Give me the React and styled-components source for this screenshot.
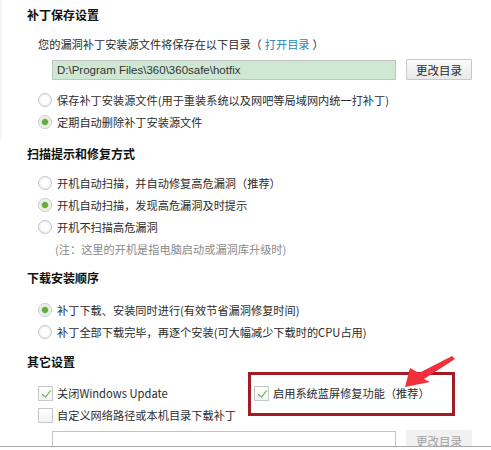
import React from "react";
import styled, { createGlobalStyle } from "styled-components";

const GlobalStyle = createGlobalStyle`
	html, body {
		margin: 0;
		padding: 0;
		background: #ffffff;
	}
	* {
		box-sizing: border-box;
	}
`;

const font = `"Noto Sans CJK SC", "Liberation Sans", sans-serif`;

export default function App() {
	return (
		<>
			<GlobalStyle />
			<Page>
				<SectionTitle>补丁保存设置</SectionTitle>
				<SectionBody>
					<Line>
						您的漏洞补丁安装源文件将保存在以下目录（<Link>打开目录</Link>）
					</Line>
					<PathRow>
						<PathInput readOnly value="D:\Program Files\360\360safe\hotfix" $filled />
						<PathButton type="button">更改目录</PathButton>
					</PathRow>
					<Options $top={9}>
						<Option>
							<Radio />
							保存补丁安装源文件(用于重装系统以及网吧等局域网内统一打补丁)
						</Option>
						<Option>
							<Radio $checked />
							定期自动删除补丁安装源文件
						</Option>
					</Options>
				</SectionBody>

				<SectionTitle $top={11}>扫描提示和修复方式</SectionTitle>
				<SectionBody>
					<Options $top={8}>
						<Option>
							<Radio />
							开机自动扫描，并自动修复高危漏洞（推荐）
						</Option>
						<Option>
							<Radio $checked />
							开机自动扫描，发现高危漏洞及时提示
						</Option>
						<Option>
							<Radio />
							开机不扫描高危漏洞
						</Option>
						<Note>(注：这里的开机是指电脑启动或漏洞库升级时)</Note>
					</Options>
				</SectionBody>

				<SectionTitle $top={8}>下载安装顺序</SectionTitle>
				<SectionBody>
					<Options $top={11}>
						<Option>
							<Radio $checked />
							补丁下载、安装同时进行(有效节省漏洞修复时间)
						</Option>
						<Option>
							<Radio />
							补丁全部下载完毕，再逐个安装(可大幅减少下载时的CPU占用)
						</Option>
					</Options>
				</SectionBody>

				<SectionTitle $top={9}>其它设置</SectionTitle>
				<SectionBody>
					<CheckGrid>
						<Option>
							<Check $checked />
							关闭Windows Update
						</Option>
						<Option>
							<Check $checked />
							启用系统蓝屏修复功能（推荐）
							<Highlight />
							<Arrow viewBox="0 0 58 36" aria-hidden="true">
								<polygon points="5,33 10,14 19,19 52,2 55,5 24,25 30,28" fill="#f2303c" />
							</Arrow>
						</Option>
						<Option>
							<Check />
							自定义网络路径或本机目录下载补丁
						</Option>
					</CheckGrid>
					<PathRow $top={4}>
						<PathInput readOnly value="" />
						<PathButton type="button" disabled>更改目录</PathButton>
					</PathRow>
				</SectionBody>
			</Page>
		</>
	);
}

const Page = styled.div`
	height: 447px;
	overflow: hidden;
	padding: 5px 0 0 27px;
	border-bottom: 1px solid #a9a9a9;
	font-family: ${font};
	font-size: 11.2px;
	color: #2b2b2b;
	background: linear-gradient(to right, #eef4ee 0, #ffffff 3px) no-repeat;
	background-size: 3px 140px;
`;

const SectionTitle = styled.div`
	margin-top: ${(p) => p.$top || 0}px;
	height: 20px;
	line-height: 20px;
	font-size: 12px;
	font-weight: bold;
	color: #111;
`;

const SectionBody = styled.div`
	padding-left: 11px;
`;

const Line = styled.div`
	margin-top: 9px;
	height: 20px;
	line-height: 20px;
`;

const Link = styled.span`
	color: #2a7fb0;
	padding: 0 3px;
`;

const Note = styled.div`
	height: 22px;
	line-height: 22px;
	padding-left: 17px;
	color: #8a8a8a;
`;

const PathRow = styled.div`
	display: flex;
	align-items: center;
	gap: 10px;
	margin-top: ${(p) => (p.$top !== undefined ? p.$top : 5)}px;
	padding-left: 14px;
`;

const PathInput = styled.input`
	width: 344px;
	height: 20px;
	padding: 0 4px;
	border: 1px solid #c4c4c4;
	background: ${(p) => (p.$filled ? "#cfe8d3" : "#ffffff")};
	font-family: "Liberation Sans", "DejaVu Sans", sans-serif;
	font-size: 11.5px;
	color: #333;
	outline: none;
`;

const PathButton = styled.button`
	width: 66px;
	height: 21px;
	padding: 0;
	border: 1px solid ${(p) => (p.disabled ? "#efefef" : "#c8c8c8")};
	border-radius: 1px;
	background: ${(p) =>
		p.disabled ? "#f1f1f1" : "linear-gradient(#fbfbfb, #e9e9e9)"};
	font-family: ${font};
	font-size: 11.5px;
	color: ${(p) => (p.disabled ? "#a2a2a2" : "#2b2b2b")};
`;

const Options = styled.div`
	margin-top: ${(p) => p.$top || 0}px;
`;

const Option = styled.div`
	position: relative;
	display: flex;
	align-items: center;
	gap: 5px;
	height: 22px;
	white-space: nowrap;
`;

const Radio = styled.span`
	flex: none;
	width: 14px;
	height: 14px;
	border-radius: 50%;
	border: 1px solid #c6c6c6;
	background: ${(p) =>
		p.$checked
			? "radial-gradient(circle, #62ad3e 0 2.6px, #dcebd3 3.6px, #f7f7f7 6px)"
			: "radial-gradient(circle, #ffffff 0 3px, #f1f1f1 6px)"};
`;

const Check = styled.span`
	flex: none;
	position: relative;
	width: 15px;
	height: 15px;
	margin-right: -1px;
	border: 1px solid #c6c6c6;
	background: linear-gradient(#ffffff, #f2f2f2);

	&::after {
		content: "";
		display: ${(p) => (p.$checked ? "block" : "none")};
		position: absolute;
		left: 4.5px;
		top: 1px;
		width: 3.5px;
		height: 8px;
		border: solid #6aae48;
		border-width: 0 1.5px 1.5px 0;
		transform: rotate(38deg);
	}
`;

const CheckGrid = styled.div`
	display: grid;
	grid-template-columns: 216px auto;
	margin-top: 10px;
`;

const Highlight = styled.span`
	position: absolute;
	left: -6px;
	top: -10px;
	width: 207px;
	height: 44px;
	border: 3px solid #a11c24;
	pointer-events: none;
`;

const Arrow = styled.svg`
	position: absolute;
	left: 146px;
	top: -28px;
	width: 58px;
	height: 36px;
	pointer-events: none;
`;
